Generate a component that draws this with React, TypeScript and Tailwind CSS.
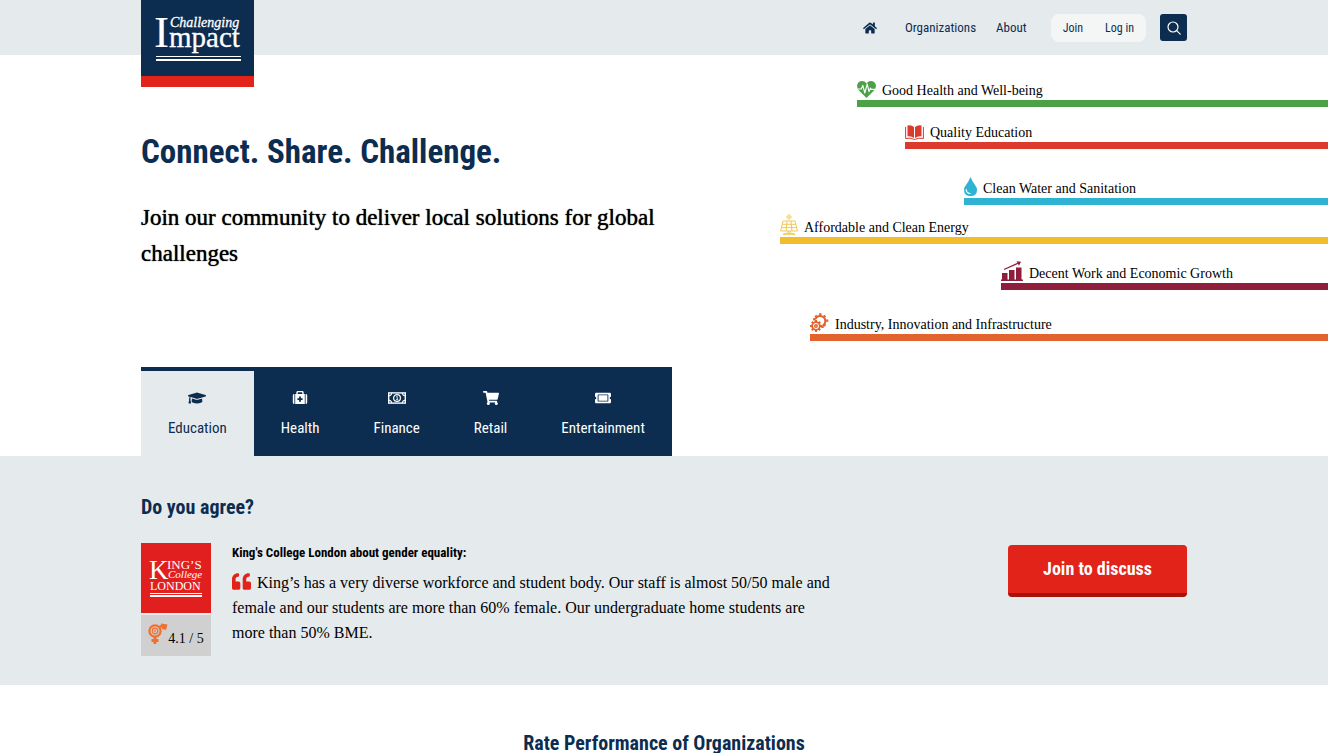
import type { ReactNode } from "react";
import { FaGraduationCap, FaHome, FaQuoteLeft, FaShoppingCart, FaTicketAlt } from "react-icons/fa";

const narrow = "font-['Liberation_Sans_Narrow','Roboto_Condensed','Liberation_Sans',sans-serif]";
const serif = "font-['Liberation_Serif',serif]";

function SiteLogo() {
  return (
    <svg viewBox="0 0 113 87" className="block h-[87px] w-[113px]" role="img" aria-label="Challenging Impact">
      <rect width="113" height="76" fill="#0c2d50" />
      <rect y="76" width="113" height="11" fill="#e2231a" />
      <g fill="#fff" fontFamily="Liberation Serif, serif">
        <text x="13" y="47" fontSize="45">I</text>
        <text x="29" y="27" fontSize="14" stroke="#fff" strokeWidth=".3" fontStyle="italic">Challenging</text>
        <text x="28" y="47" fontSize="29" stroke="#fff" strokeWidth=".3">mpact</text>
      </g>
      <rect x="15" y="56" width="85" height="1" fill="#fff" />
      <rect x="15" y="59" width="85" height="2" fill="#fff" />
    </svg>
  );
}

function KingsLogo() {
  return (
    <svg viewBox="0 0 70 70" className="block size-[70px]" role="img" aria-label="King's College London">
      <rect width="70" height="70" fill="#e21f1f" />
      <g fill="#fff" fontFamily="Liberation Serif, serif">
        <text x="8" y="36" fontSize="27">K</text>
        <text x="26" y="26" fontSize="13">ING’S</text>
        <text x="27" y="35" fontSize="11" fontStyle="italic">College</text>
        <text x="9" y="47" fontSize="12">LONDON</text>
      </g>
      <rect x="9" y="50" width="52" height="1" fill="#fff" />
      <rect x="9" y="52" width="52" height="2" fill="#fff" />
    </svg>
  );
}

function SearchIcon() {
  return (
    <svg viewBox="0 0 14 14" className="size-[14px]" fill="none" stroke="#fff" strokeWidth="1.2" strokeLinecap="round" aria-hidden="true">
      <circle cx="6" cy="6" r="5" />
      <path d="M9.7 9.7 13.2 13.2" />
    </svg>
  );
}

function MedkitIcon() {
  return (
    <svg viewBox="0 0 16 14" className="h-[14px] w-4" aria-hidden="true">
      <path d="M5 3V1.7Q5 .6 6.1.6h3.8Q11 .6 11 1.7V3" fill="none" stroke="#fff" strokeWidth="1.4" />
      <path d="M.8 4.4Q.8 3 2.4 3v10Q.8 13 .8 11.8ZM15.2 4.4Q15.2 3 13.6 3v10q1.6 0 1.6-1.2ZM3.2 3h9.6v10H3.2Z" fill="#fff" />
      <path d="M7.1 5.5h1.8v1.7h1.7V9H8.9v1.7H7.1V9H5.4V7.2h1.7Z" fill="#0c2d50" />
    </svg>
  );
}

function MoneyIcon() {
  return (
    <svg viewBox="0 0 18 12" className="h-3 w-[18px]" fill="none" stroke="#fff" aria-hidden="true">
      <rect x=".7" y=".9" width="16.6" height="10.2" strokeWidth="1.4" />
      <path d="M1 3.8Q3.5 3.5 3.8 1M14.2 1Q14.500 3.500 17 3.800M1 8.200q2.500.3 2.800 2.800M14.200 11q.3-2.500 2.800-2.800" strokeWidth="1.1" />
      <circle cx="9" cy="6" r="3.4" strokeWidth="1.2" />
      <path d="M8.3 4.8 9.2 4.4V7.6M8.2 7.6h2" strokeWidth=".9" />
    </svg>
  );
}

function HeartIcon() {
  return (
    <svg viewBox="0 0 19 17" className="h-[17px] w-[19px]" aria-hidden="true">
      <path d="M9.5 17 1.5 8.9Q-.5 6 .4 3.3 1.8 0 5 0 8 0 9.5 2.4 11 0 14 0q3.2 0 4.6 3.3.9 2.7-1.1 5.6Z" fill="#4ca146" />
      <path d="M1 8h3.200l1.600-3.600 2 7.600 2.400-9 1.800 7.600 1.500-3.600.7 1.400H18" fill="none" stroke="#fff" strokeWidth="1.1" strokeLinejoin="round" />
    </svg>
  );
}

function BookIcon() {
  return (
    <svg viewBox="0 0 19 15" className="h-[15px] w-[19px]" aria-hidden="true">
      <path d="M9 2Q6-.6 2.500.5v10.800Q6 10.600 9 13ZM10 2q3-2.600 6.500-1.500v10.800Q13 10.600 10 13Z" fill="#da3b2c" />
      <path d="M.6 2v11.500q4.600-1 8.200.8h1.400q3.600-1.800 8.200-.8V2" fill="none" stroke="#da3b2c" strokeWidth="1" />
    </svg>
  );
}

function DropIcon() {
  return (
    <svg viewBox="0 0 13 19" className="h-[19px] w-[13px]" aria-hidden="true">
      <path d="M6.500 0Q8 4 11 8q2 2.500 2 5 0 6-6.500 6T0 13q0-2.500 2-5 3-4 4.500-8Z" fill="#2fb3d3" />
      <path d="M2.200 12.500q.2 3.700 3.800 4" fill="none" stroke="#fff" strokeWidth="1.2" strokeLinecap="round" />
    </svg>
  );
}

function SolarIcon() {
  return (
    <svg viewBox="0 0 18 21" className="h-[21px] w-[18px]" fill="none" stroke="#f0bd2c" strokeWidth=".8" aria-hidden="true">
      <circle cx="9" cy="3" r="1.3" />
      <path d="M9 0v.9M9 5.100V6M6 3h.900M11.100 3h.900M6.900.9l.6.6M10.500 4.500l.6.6M11.100.9l-.6.6M7.500 4.500l-.6.6" />
      <path d="M3 7h12l2.400 10H.6ZM2.200 10.300h13.600M1.400 13.600h15.200M7 7l-.9 10M11 7l.9 10M8 17v2.300M10 17v2.300M3 20.300l3-1h6l3 1Z" />
    </svg>
  );
}

function GrowthIcon() {
  return (
    <svg viewBox="0 0 22 20" className="h-5 w-[22px]" aria-hidden="true">
      <path d="M0 18.500h22V20H0ZM1 12h5.500v6.500H1ZM8 9h5.500v9.500H8ZM15 6.500h5.500v12H15Z" fill="#8f1d3c" />
      <path d="M3 8.500 17.500 2" stroke="#8f1d3c" strokeWidth="1.2" />
      <path d="M15.500.3 20 .8 18 4.800Z" fill="#8f1d3c" />
    </svg>
  );
}

function GearsIcon() {
  return (
    <svg viewBox="0 0 19 19" className="size-[19px]" fill="none" stroke="#e1632e" aria-hidden="true">
      <circle cx="6" cy="13" r="3.8" strokeWidth="1.8" />
      <path
        d="M6 7v2M6 17v2M0 13h2M10 13h2M1.800 8.800l1.400 1.400M8.800 15.800l1.400 1.400M1.800 17.200l1.400-1.400M8.800 10.200l1.400-1.400"
        strokeWidth="2"
      />
      <circle cx="6" cy="13" r="1.3" strokeWidth="1.4" />
      <path d="M5.500 5.800A5.200 5.200 0 1 1 12.800 12.600" strokeWidth="2" />
      <path d="M5.300 2.600l1.500 1.500M10.300.2v2.200M15.300 2.600l-1.500 1.500M18.300 7.600h-2.400M15.400 12.800l-1.500-1.500M12.500 15v-2.500M3.200 6.300h2.500" strokeWidth="2.4" />
    </svg>
  );
}

function EqualityIcon() {
  return (
    <svg viewBox="0 0 20 21" className="mb-1 h-[21px] w-5" fill="none" stroke="#f07030" aria-hidden="true">
      <circle cx="7" cy="8" r="5.600" strokeWidth="2.2" />
      <circle cx="7" cy="8" r="2.800" strokeWidth="1.2" />
      <path d="M5.800 7.300h2.400M5.800 8.800h2.400" strokeWidth=".8" />
      <path d="M7 13.500V21M3.500 17.500h7" strokeWidth="2.8" />
      <path d="M11 4.500l3-2" strokeWidth="2.4" />
      <path d="M13 .5 19.500 1.500 18 7 14 6Z" fill="#f07030" stroke="none" />
    </svg>
  );
}

type Goal = { label: string; icon: ReactNode; row: string };

const goals: Goal[] = [
  { label: "Good Health and Well-being", icon: <HeartIcon />, row: "ml-[185px] border-[#4ca146]" },
  { label: "Quality Education", icon: <BookIcon />, row: "ml-[233px] mt-2 border-[#da3b2c]" },
  { label: "Clean Water and Sanitation", icon: <DropIcon />, row: "ml-[292px] mt-[22px] border-[#2fb3d3]" },
  { label: "Affordable and Clean Energy", icon: <SolarIcon />, row: "ml-[108px] mt-[5px] border-[#f0bd2c]" },
  { label: "Decent Work and Economic Growth", icon: <GrowthIcon />, row: "ml-[329px] mt-3 border-[#8f1d3c]" },
  { label: "Industry, Innovation and Infrastructure", icon: <GearsIcon />, row: "ml-[138px] mt-[17px] border-[#e1632e]" },
];

const tabs: { label: string; icon: ReactNode }[] = [
  { label: "Education", icon: <FaGraduationCap className="size-[18px]" /> },
  { label: "Health", icon: <MedkitIcon /> },
  { label: "Finance", icon: <MoneyIcon /> },
  { label: "Retail", icon: <FaShoppingCart className="size-4" /> },
  { label: "Entertainment", icon: <FaTicketAlt className="size-4" /> },
];

export default function App() {
  return (
    <div className={`${serif} overflow-x-hidden bg-white text-black`}>
      <header className="bg-[#e5eaed]">
        <div className="relative mx-auto flex h-[55px] max-w-[1046px] items-center justify-end">
          <a href="#home" className="absolute left-0 top-0">
            <SiteLogo />
          </a>
          <nav className={`${narrow} flex items-center text-[13px] text-[#0c2d50]`}>
            <a href="#home" aria-label="Home" className="mr-7">
              <FaHome className="size-[14px]" />
            </a>
            <a href="#organizations" className="mr-5">Organizations</a>
            <a href="#about" className="mr-6">About</a>
            <div className="mr-[14px] flex h-7 items-center gap-[22px] rounded-lg bg-[#f4f5f5] px-3 text-xs">
              <a href="#join">Join</a>
              <a href="#login">Log in</a>
            </div>
            <button type="button" aria-label="Search" className="flex size-[27px] items-center justify-center rounded-[3px] bg-[#0c2d50]">
              <SearchIcon />
            </button>
          </nav>
        </div>
      </header>

      <section className="flex">
        <div className="shrink-0 pl-[max(16px,calc(50vw-523px))]">
          <div className="w-[531px]">
            <h1 className={`${narrow} pt-[73px] text-[33px] font-bold leading-[48px] text-[#0c2d50]`}>
              Connect. Share. Challenge.
            </h1>
            <p className="pt-6 text-[23px] leading-9 [text-shadow:0_0_1px_#000]">
              Join our community to deliver local solutions for global challenges
            </p>
            <div className={`${narrow} mt-[95px] inline-flex border-t-4 border-[#0c2d50] bg-[#0c2d50] text-[15px] align-top`} role="tablist">
              {tabs.map((tab, i) => (
                <button
                  key={tab.label}
                  type="button"
                  role="tab"
                  aria-selected={i === 0}
                  className={`flex h-[85px] flex-col items-center px-[27px] pt-[18px] ${
                    i === 0 ? "bg-[#e5eaed] text-[#0c2d50]" : "text-white"
                  }`}
                >
                  <span className="flex h-[18px] items-center">{tab.icon}</span>
                  <span className="mt-[9px] leading-6">{tab.label}</span>
                </button>
              ))}
            </div>
          </div>
        </div>
        <ul className="min-w-0 flex-1 pt-[18px]">
          {goals.map((goal) => (
            <li key={goal.label} className={`flex h-[34px] items-end gap-[6px] border-b-7 ${goal.row}`}>
              <span className="pb-[2px]">{goal.icon}</span>
              <span className="whitespace-nowrap text-sm leading-[18px]">{goal.label}</span>
            </li>
          ))}
        </ul>
      </section>

      <section className="bg-[#e5eaed]">
        <div className="mx-auto max-w-[1046px] pb-[29px] pt-[35px]">
          <h2 className={`${narrow} text-xl font-bold leading-8 text-[#0c2d50]`}>Do you agree?</h2>
          <div className="mt-5 flex items-start">
            <div className="w-[70px] shrink-0">
              <KingsLogo />
              <div className="mt-[2px] flex h-[41px] items-center justify-center bg-[#d0d0d0] text-sm">
                <EqualityIcon />
                <span className="pt-[6px]">4.1 / 5</span>
              </div>
            </div>
            <div className="ml-[21px] w-[600px]">
              <h3 className={`${narrow} text-[13px] font-bold leading-5`}>King's College London about gender equality:</h3>
              <blockquote className="mt-[7px] text-base leading-[25px]">
                <FaQuoteLeft className="mr-[6px] inline-block size-[19px] align-[-3px] text-[#e2231a]" />
                King’s has a very diverse workforce and student body. Our staff is almost 50/50 male and female and our
                students are more than 60% female. Our undergraduate home students are more than 50% BME.
              </blockquote>
            </div>
            <button
              type="button"
              className={`${narrow} ml-auto mt-[2px] h-[52px] w-[179px] rounded border-b-4 border-[#a5130c] bg-[#e2231a] text-lg font-bold text-white`}
            >
              Join to discuss
            </button>
          </div>
        </div>
      </section>

      <section className="pt-[42px]">
        <h2 className={`${narrow} text-center text-xl font-bold leading-8 text-[#0c2d50]`}>
          Rate Performance of Organizations
        </h2>
      </section>
    </div>
  );
}
